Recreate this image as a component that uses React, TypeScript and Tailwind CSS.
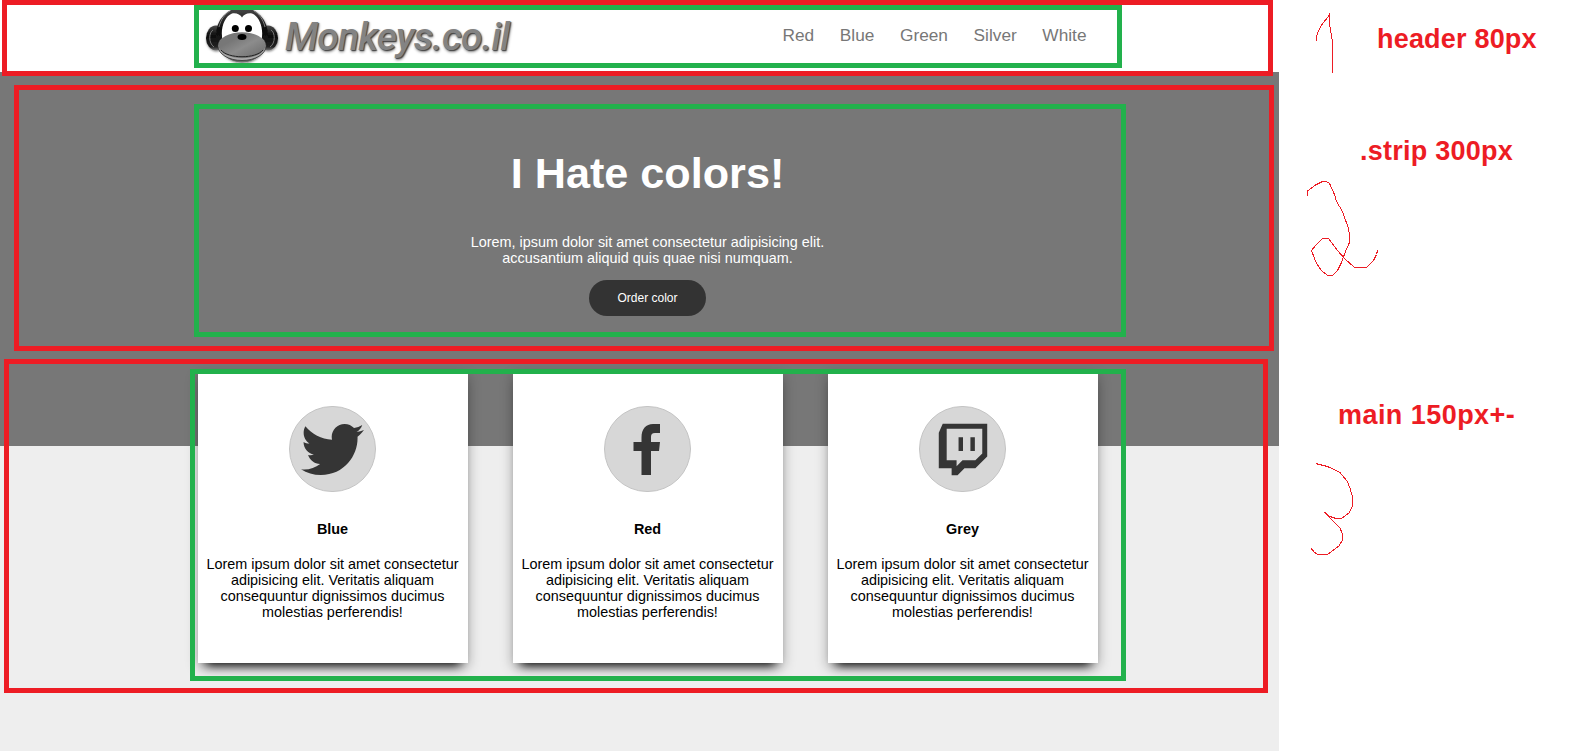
import { FaTwitter } from "react-icons/fa";

const NAV = ["Red", "Blue", "Green", "Silver", "White"];

function Monkey() {
  return (
    <svg width="84" height="63" viewBox="200 5 84 63" className="block shrink-0">
      <defs>
        <linearGradient id="fur" x1="0" y1="0" x2="0" y2="1">
          <stop offset="0" stopColor="#4a4a4a" />
          <stop offset="0.4" stopColor="#0c0c0c" />
          <stop offset="0.85" stopColor="#222" />
          <stop offset="1" stopColor="#777" />
        </linearGradient>
        <linearGradient id="muzzle" x1="0" y1="0" x2="1" y2="1">
          <stop offset="0.3" stopColor="#777" />
          <stop offset="0.55" stopColor="#8c8c8c" />
          <stop offset="1" stopColor="#686868" />
        </linearGradient>
        <filter id="soft" x="-20%" y="-20%" width="140%" height="140%">
          <feDropShadow dx="0.5" dy="1" stdDeviation="1.2" floodColor="#000" floodOpacity="0.5" />
        </filter>
      </defs>
      <g filter="url(#soft)">
        <ellipse cx="216" cy="38" rx="10" ry="12.5" fill="url(#fur)" />
        <ellipse cx="268" cy="38" rx="10" ry="12.5" fill="url(#fur)" />
        <ellipse cx="242" cy="35" rx="26" ry="27.5" fill="url(#fur)" />
      </g>
      <path d="M213 30c-4 2-5 13 1 17" fill="none" stroke="#777" strokeWidth="1" />
      <path d="M271 30c4 2 5 13-1 17" fill="none" stroke="#777" strokeWidth="1" />
      <path d="M219 27c2-8 6-13 11-16M265 27c-2-8-6-13-11-16" fill="none" stroke="#888" strokeWidth="0.9" />
      <ellipse cx="242" cy="46" rx="24" ry="14.5" fill="#aaa" stroke="#333" strokeWidth="0.8" />
      <path d="M242 17.500c-1.500-3-6-5-10-4-8 3-12.500 17-9 28h38c3.500-11-1-25-9-28-4-1-8.500 1-10 4z" fill="#fff" />
      <ellipse cx="242" cy="45.200" rx="23.500" ry="13" fill="url(#muzzle)" />
      <path d="M221 50c7 9 35 9 42 0" fill="none" stroke="#222" strokeWidth="1" />
      <circle cx="235.3" cy="28.5" r="3.5" />
      <circle cx="248.5" cy="28.5" r="3.5" />
      <ellipse cx="242" cy="37" rx="4.5" ry="3" />
    </svg>
  );
}

function FacebookGlyph() {
  return (
    <svg width="87" height="86" viewBox="0 0 87 86" className="shrink-0">
      <path fill="#353535" d="M37.500 69V45H29.500V36h8V31.500C37.500 23 42 18 49 18h7v9h-5c-3 0-4 1.500-4 4v5h9l-1 9h-8v24z" />
    </svg>
  );
}

function TwitchGlyph() {
  return (
    <svg width="86" height="86" viewBox="0 0 87 87" className="shrink-0">
      <path
        fillRule="evenodd"
        fill="#353535"
        d="M23 18h45v33L56 63H45l-7 7h-6v-7H19V27zM27 23v32h10v6l6-6h13l7-7V23z"
      />
      <path fill="#353535" d="M39 31.500h4.500v14H39zM51 31.500h4.500v14H51z" />
    </svg>
  );
}

const CARDS = [
  { title: "Blue", icon: <FaTwitter className="h-[63px] w-[63px] text-[#353535]" /> },
  { title: "Red", icon: <FacebookGlyph /> },
  { title: "Grey", icon: <TwitchGlyph /> },
];

function Notes() {
  return (
    <svg
      className="pointer-events-none absolute inset-0"
      width="1594"
      height="751"
      viewBox="0 0 1594 751"
      fill="none"
      shapeRendering="crispEdges"
    >
      <g stroke="#ed1c24" strokeWidth="5">
        <rect x="4.500" y="2.500" width="1266" height="71" />
        <rect x="16.500" y="87.500" width="1255" height="261" />
        <rect x="6.500" y="361.500" width="1259" height="329" />
      </g>
      <g stroke="#22b14c" strokeWidth="5">
        <rect x="196.500" y="7.500" width="923" height="58" />
        <rect x="196.500" y="106.500" width="927" height="228" />
        <rect x="192.500" y="371.500" width="931" height="307" />
      </g>
      <g stroke="#ed1c24" strokeWidth="1">
        <path d="M1316.500 41v-5l2-5 3-6 8-10v-2v11l1 6 2 12v31" />
        <path d="M1307.500 196v-5l8-6 7-3.500h4l3 2 5 11 2 7 6 10 6 17 1 6v8l-4 9-4 11-4 8-5 5h-5l-6-5-5-7-5-13 5-6 6-6h6l9 12 7 8 10 9h12l7-7 3-6 1-4" />
        <path d="M1316 463.500L1319 464.500L1324 465.500L1330 467.500L1340 472.500L1347 481L1350 488L1352.500 497V506L1349 513L1342 518L1336 518.500L1330 516.500L1324 512L1329 517L1340 528L1342.500 534V540L1339 546L1331 552L1327 554.500H1318L1314 552L1311 548" />
      </g>
    </svg>
  );
}

export default function App() {
  return (
    <div className="relative flex h-[751px] w-[1594px] overflow-hidden bg-white font-['Liberation_Sans',Arial,sans-serif]">
      <div className="flex w-[1279px] shrink-0 flex-col bg-[#eeeeee]">
        <header className="flex h-[72px] shrink-0 justify-between bg-white pr-[192.5px] pl-[200px]">
          <div className="flex pt-[5px]">
            <Monkey />
            <span className="mt-[9px] ml-px font-['Roboto',sans-serif] text-[39px] leading-[46px] font-medium tracking-[-0.8px] text-[#838383] italic [text-shadow:1px_1px_1px_#444,1px_2px_3px_#888]">
              Monkeys.co.il
            </span>
          </div>
          <nav className="flex gap-[25.6px] pt-[25px] text-[17.28px] leading-[20px] text-[#777]">
            {NAV.map((n) => (
              <a key={n}>{n}</a>
            ))}
          </nav>
        </header>
        <section className="flex h-[374px] shrink-0 flex-col items-center bg-[#777777] pt-[76px] pl-[16px] text-white">
          <h1 className="text-[43.2px] leading-[50px] font-bold">I Hate colors!</h1>
          <p className="mt-[36px] text-center text-[14.4px] leading-[16px]">
            Lorem, ipsum dolor sit amet consectetur adipisicing elit.
            <br />
            accusantium aliquid quis quae nisi numquam.
          </p>
          <button className="mt-[14px] h-[36px] w-[117px] rounded-full bg-[#333] text-[12px]">Order color</button>
        </section>
        <main className="-mt-[74px] flex gap-[45px] pl-[198px]">
          {CARDS.map((c) => (
            <article
              key={c.title}
              className="flex h-[291px] w-[270px] flex-col items-center bg-white pt-[34px] pr-px shadow-[0_10px_10px_-8px_#000,0_4px_12px_rgba(0,0,0,0.3)]"
            >
              <div className="flex h-[86px] w-[87px] items-center justify-center rounded-full border border-[#c4c4c4] bg-[#d7d7d7]">
                {c.icon}
              </div>
              <h2 className="mt-[29px] text-[14.4px] leading-[16px] font-bold">{c.title}</h2>
              <p className="mt-[19px] text-center text-[14.4px] leading-[16px]">
                Lorem ipsum dolor sit amet consectetur
                <br />
                adipisicing elit. Veritatis aliquam
                <br />
                consequuntur dignissimos ducimus
                <br />
                molestias perferendis!
              </p>
            </article>
          ))}
        </main>
      </div>
      <aside className="flex flex-col text-[27px] leading-[32px] font-bold whitespace-nowrap text-[#ed1c24]">
        <div className="pt-[23px] pl-[98px] tracking-[0.2px]">header 80px</div>
        <div className="pt-[80px] pl-[81px] tracking-[0.25px]">.strip 300px</div>
        <div className="pt-[232px] pl-[59px] tracking-[0.45px]">main 150px+-</div>
      </aside>
      <Notes />
    </div>
  );
}
